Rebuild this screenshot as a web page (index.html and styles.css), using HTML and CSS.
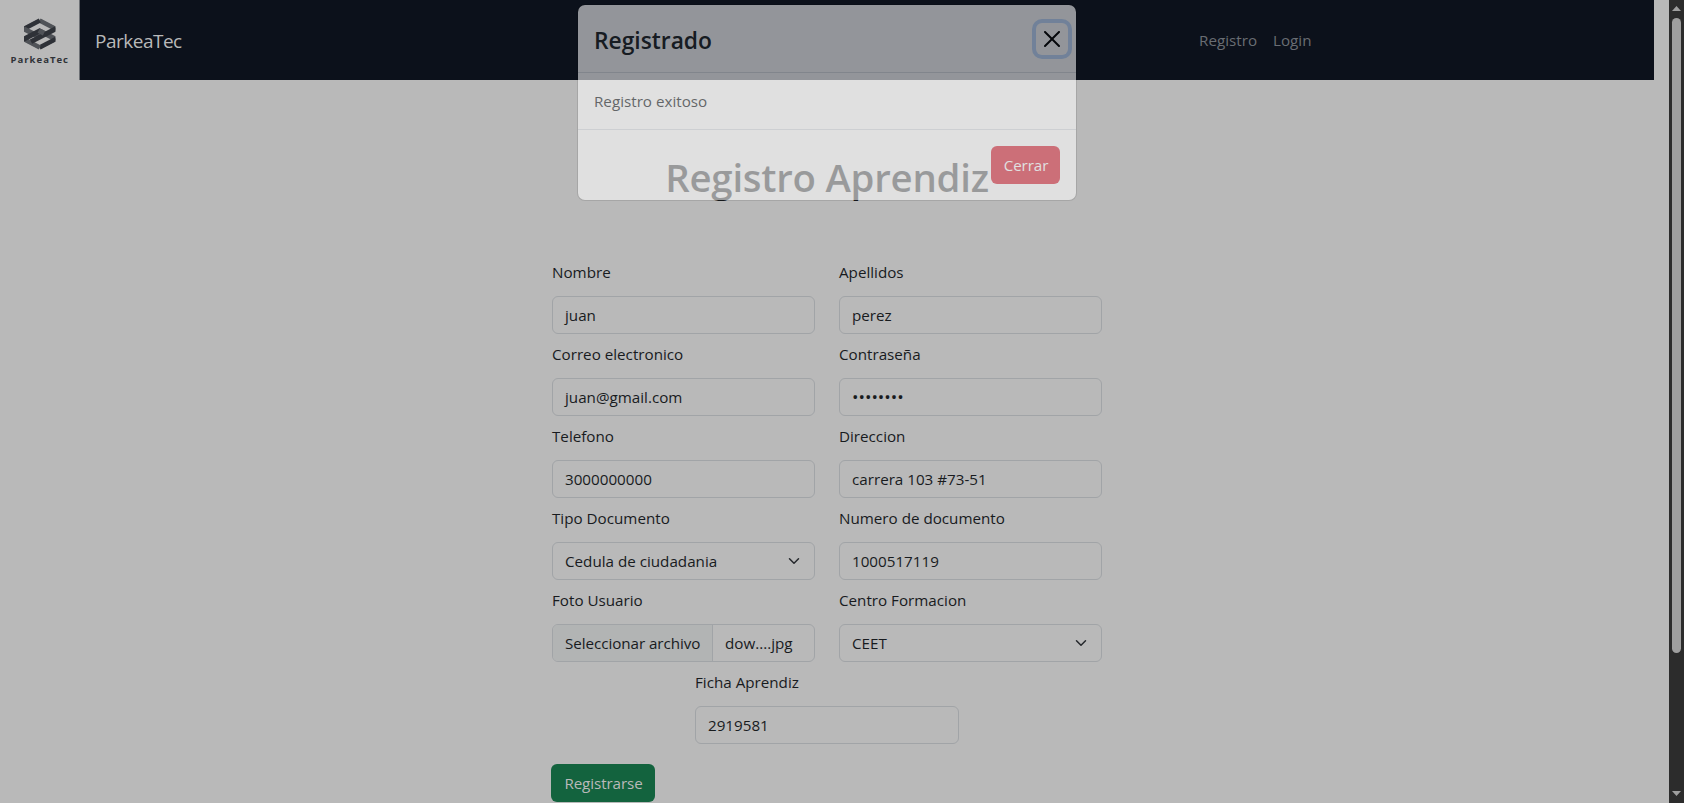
FILE: index.html
```html
<!DOCTYPE html>
<html lang="es">
<head>
<meta charset="utf-8">
<title>ParkeaTec</title>
<link rel="stylesheet" href="styles.css">
</head>
<body>
<div class="page">
  <header class="navbar">
    <svg class="logo" width="80" height="80" viewBox="0 0 80 80">
      <clipPath id="hex"><path d="M39.700 18L55.500 26.200V41.800L39.700 50L24 41.800V26.200Z"/></clipPath>
      <rect width="79" height="80" fill="#b9b9b9"/><rect x="79" width="1" height="80" fill="#6d7075"/>
      <g fill="none" stroke-width="5" clip-path="url(#hex)">
        <path d="M39.700 31L56 39.300" stroke="#505358"/>
        <path d="M56 39.300L39.700 47.700" stroke="#2e3137"/>
        <path d="M39.700 47.700L23.500 39.300" stroke="#505358"/>
        <path d="M39.700 20.300L56 28.700" stroke="#505358"/>
        <path d="M23.500 28.700L39.700 20.300" stroke="#2e3137"/>
        <path d="M23.500 28.700L39.700 37" stroke="#505358"/>
        <path d="M56 28.700L31 41.600" stroke="#2e3137"/>
        <path d="M23.500 39.300L41 30.300" stroke="#2e3137"/>
        <path d="M38.700 30.500L44 33.200" stroke="#505358"/>
      </g>
      <text class="logo-text" x="10.500" y="62.500" textLength="57.500">ParkeaTec</text>
    </svg>
    <a class="brand">ParkeaTec</a>
    <nav class="links"><a>Registro</a><a>Login</a></nav>
  </header>
  <main class="content">
    <h1 class="heading">Registro Aprendiz</h1>
    <form class="form">
      <div class="grid">
        <div class="field"><label>Nombre</label><div class="control">juan</div></div>
        <div class="field"><label>Apellidos</label><div class="control">perez</div></div>
        <div class="field"><label>Correo electronico</label><div class="control">juan@gmail.com</div></div>
        <div class="field"><label>Contraseña</label><div class="control dots">••••••••</div></div>
        <div class="field"><label>Telefono</label><div class="control">3000000000</div></div>
        <div class="field"><label>Direccion</label><div class="control">carrera 103 #73-51</div></div>
        <div class="field"><label>Tipo Documento</label><div class="control select">Cedula de ciudadania<svg class="chevron" viewBox="0 0 16 16"><path d="m2 5 6 6 6-6"/></svg></div></div>
        <div class="field"><label>Numero de documento</label><div class="control">1000517119</div></div>
        <div class="field"><label>Foto Usuario</label><div class="control file"><span class="file-btn">Seleccionar archivo</span><span class="file-name">dow....jpg</span></div></div>
        <div class="field"><label>Centro Formacion</label><div class="control select">CEET<svg class="chevron" viewBox="0 0 16 16"><path d="m2 5 6 6 6-6"/></svg></div></div>
      </div>
      <div class="field single"><label>Ficha Aprendiz</label><div class="control">2919581</div></div>
      <button class="btn submit" type="button">Registrarse</button>
    </form>
  </main>
</div>
<div class="scrollbar">
  <svg width="9" height="5" viewBox="0 0 9 5"><path d="M4.500 0L9 5H0Z" fill="#9f9f9f"/></svg>
  <div class="track"><div class="thumb"></div></div>
  <svg width="9" height="5" viewBox="0 0 9 5"><path d="M0 0H9L4.500 5Z" fill="#9f9f9f"/></svg>
</div>
<div class="modal" role="dialog">
  <div class="modal-header"><h2 class="modal-title">Registrado</h2>
    <button class="close" type="button" aria-label="Close"><svg width="16" height="16" viewBox="0 0 16 16"><path d="M.293.293a1 1 0 0 1 1.414 0L8 6.586 14.293.293a1 1 0 1 1 1.414 1.414L9.414 8l6.293 6.293a1 1 0 0 1-1.414 1.414L8 9.414l-6.293 6.293a1 1 0 0 1-1.414-1.414L6.586 8 .293 1.707a1 1 0 0 1 0-1.414z"/></svg></button></div>
  <div class="modal-body">Registro exitoso</div>
  <div class="modal-footer"><button class="btn danger" type="button">Cerrar</button></div>
</div>
</body>
</html>
```
FILE: styles.css
```css
* { box-sizing: border-box; }
body {
  margin: 0;
  height: 803px;
  display: flex;
  overflow: hidden;
  background: #b9b9b9;
  color: #181b1e;
  font: 15.2px/24px "Open Sans", "Noto Sans", sans-serif;
}
.page { width: 1669px; padding-right: 15px; }
.navbar { height: 80px; display: flex; align-items: center; background: #0c111b; }
.logo { display: block; }
.logo-text { font: 700 9.5px "Open Sans", sans-serif; fill: #303338; }
.brand { margin-left: 15px; padding-top: 1px; font-size: 19px; letter-spacing: -.5px; line-height: 30px; color: #b9b9b9; }
.links { margin-left: auto; margin-right: 342.5px; display: flex; gap: 16px; color: #696d73; }
.content { width: 550px; margin: 0 auto; }
.heading { margin: 73px 0 59px; font-size: 38.4px; letter-spacing: -.25px; line-height: 48px; font-weight: 560; text-align: center; white-space: nowrap; }
.grid { display: grid; grid-template-columns: 263px 263px; gap: 8px 24px; }
.field label { display: block; margin-bottom: 12px; }
.single { width: 264px; margin: 8px auto 20px; }
.control {
  height: 38px;
  padding: 6px 12px;
  display: flex;
  border: 1px solid #a1a4a7;
  border-radius: 6px;
  white-space: nowrap;
}
.dots { font-size: 17.2px; }
.select { justify-content: space-between; }
.chevron { width: 16px; height: 12px; margin-top: 6px; fill: none; stroke: #25282c; stroke-width: 2; stroke-linecap: round; stroke-linejoin: round; }
.file { padding: 0; overflow: hidden; }
.file-btn { width: 160px; padding: 6px 0 6px 12px; background: #b2b4b4; border-right: 1px solid #a1a4a7; letter-spacing: -.06px; }
.file-name { padding: 6px 12px; }
.btn { height: 38px; border: 0; padding: 0 0 0 1px; border-radius: 6px; font: inherit; letter-spacing: -.1px; }
.submit { display: block; width: 104px; margin-left: -1px; background: #13633e; color: #b9b9b9; }
.scrollbar { width: 15px; padding: 6px 0 7px; background: #2c2c2c; display: flex; flex-direction: column; align-items: center; }
.scrollbar svg { flex: none; }
.track { flex: 1; padding-top: 7px; }
.thumb { width: 9px; height: 635px; border-radius: 5px; background: #9f9f9f; }
.modal {
  position: absolute;
  left: 577px;
  top: 4px;
  width: 500px;
  height: 197px;
  background: #fff;
  border: 1px solid rgba(0, 0, 0, .175);
  background-clip: padding-box;
  border-radius: 8px;
  color: #212529;
  opacity: .555;
}
.modal-header { height: 68px; padding: 2px 8px 0 16px; display: flex; align-items: center; justify-content: space-between; border-bottom: 1px solid #dee2e6; }
.modal-title { margin: 2px 0 0; font-size: 22.8px; line-height: 36px; font-weight: 600; }
.close { width: 32px; height: 32px; margin-top: -2px; padding: 8px; border: 0; border-radius: 6px; background: none; box-shadow: 0 0 0 4px rgba(13, 110, 253, .25); }
.close svg { display: block; }
.modal-body { height: 57px; padding: 16px; border-bottom: 1px solid #dee2e6; }
.modal-footer { display: flex; justify-content: flex-end; padding: 16px; }
.danger { width: 69px; background: #dc3545; color: #fff; }
```
